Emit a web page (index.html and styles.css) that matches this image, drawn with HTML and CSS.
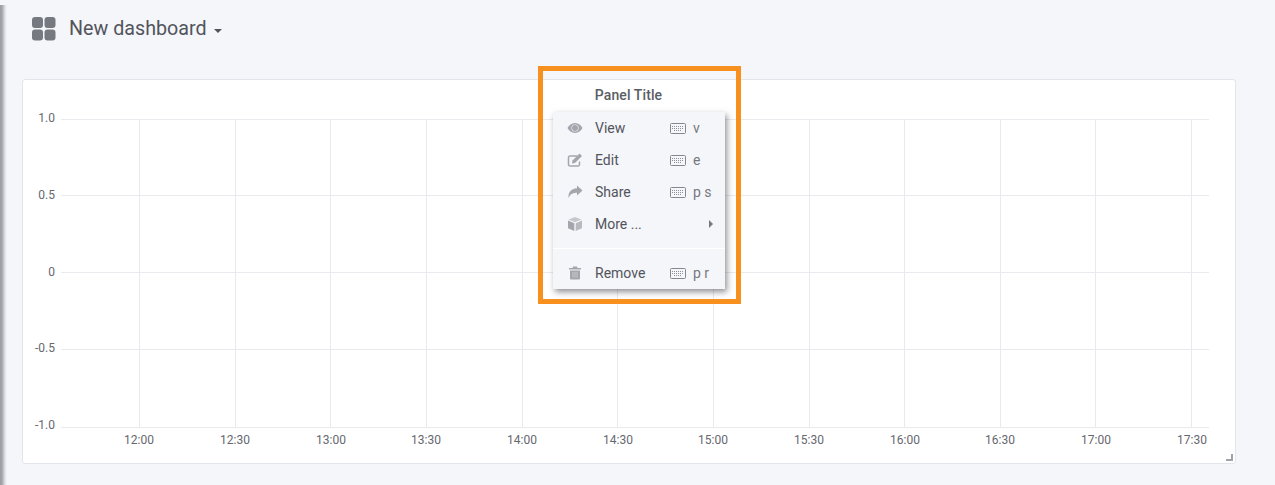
FILE: index.html
```html
<!DOCTYPE html>
<html lang="en">
<head>
    <meta charset="UTF-8">
    <title>New dashboard</title>
    <link rel="stylesheet" href="styles.css">
</head>
<body>

<div class="page">
    <div class="navbar">
        <svg class="dash-icon" width="24" height="24" viewBox="0 0 24 24">
            <rect x="0" y="0" width="11" height="11" rx="3"/>
            <rect x="12.5" y="0" width="11" height="11" rx="3"/>
            <rect x="0" y="12.5" width="11" height="11" rx="3"/>
            <rect x="12.5" y="12.5" width="11" height="11" rx="3"/>
        </svg>
        <span class="dash-title">New dashboard</span>
        <span class="caret"></span>
    </div>

    <div class="panel">
        <div class="panel-title">Panel Title</div>
        <svg class="chart" width="1212" height="383" viewBox="23 80 1212 383">
            <g class="grid">
                <line x1="139.5" y1="119" x2="139.5" y2="427"/>
                <line x1="235.5" y1="119" x2="235.5" y2="427"/>
                <line x1="330.5" y1="119" x2="330.5" y2="427"/>
                <line x1="426.5" y1="119" x2="426.5" y2="427"/>
                <line x1="522.5" y1="119" x2="522.5" y2="427"/>
                <line x1="617.5" y1="119" x2="617.5" y2="427"/>
                <line x1="713.5" y1="119" x2="713.5" y2="427"/>
                <line x1="809.5" y1="119" x2="809.5" y2="427"/>
                <line x1="904.5" y1="119" x2="904.5" y2="427"/>
                <line x1="1000.5" y1="119" x2="1000.5" y2="427"/>
                <line x1="1095.5" y1="119" x2="1095.5" y2="427"/>
                <line x1="1191.5" y1="119" x2="1191.5" y2="427"/>
                <line x1="61" y1="119.5" x2="1209" y2="119.5"/>
                <line x1="61" y1="195.5" x2="1209" y2="195.5"/>
                <line x1="61" y1="272.5" x2="1209" y2="272.5"/>
                <line x1="61" y1="349.5" x2="1209" y2="349.5"/>
                <line x1="61" y1="427.5" x2="1209" y2="427.5"/>
            </g>
            <g class="y-labels">
                <text x="55" y="122">1.0</text>
                <text x="55" y="199">0.5</text>
                <text x="55" y="276">0</text>
                <text x="55" y="352">-0.5</text>
                <text x="55" y="429">-1.0</text>
            </g>
            <g class="x-labels">
                <text x="139" y="444">12:00</text>
                <text x="235" y="444">12:30</text>
                <text x="331" y="444">13:00</text>
                <text x="426" y="444">13:30</text>
                <text x="522" y="444">14:00</text>
                <text x="618" y="444">14:30</text>
                <text x="713" y="444">15:00</text>
                <text x="809" y="444">15:30</text>
                <text x="905" y="444">16:00</text>
                <text x="1000" y="444">16:30</text>
                <text x="1096" y="444">17:00</text>
                <text x="1192" y="444">17:30</text>
            </g>
        </svg>
        <svg class="resize-handle" width="7" height="7" viewBox="0 0 7 7">
            <path d="M5 0h2v7H0V5h5z"/>
        </svg>

        <div class="panel-menu">
            <div class="menu-item">
                <svg class="menu-icon" width="16" height="16" viewBox="0 0 16 16">
                    <path fill-rule="evenodd" d="M8 3c3.500 0 6 2.300 7.500 5C14 10.700 11.500 13 8 13S2 10.700.5 8C2 5.300 4.500 3 8 3zm0 1.400a3.600 3.600 0 1 0 0 7.200 3.600 3.600 0 0 0 0-7.200z"/>
                    <circle cx="8" cy="8" r="3"/>
                </svg>
                <span class="menu-label">View</span>
                <span class="menu-key">
                    <svg class="kbd-icon" width="16" height="11" viewBox="0 0 16 11"><rect x=".5" y=".5" width="15" height="10" rx="1"/><path class="keys" d="M2 3.500h12M2 5.500h12M4 7.500h8"/></svg>
                    v
                </span>
            </div>
            <div class="menu-item">
                <svg class="menu-icon" width="16" height="16" viewBox="0 0 16 16">
                    <path class="outline" d="M12.500 9.500v3a1.500 1.500 0 0 1-1.500 1.500H3a1.500 1.500 0 0 1-1.500-1.500V5.500A1.500 1.500 0 0 1 3 4h7"/>
                    <path d="M5.500 8.500L12.500 1.500l2.500 2.500-7 7-3 .5z"/>
                </svg>
                <span class="menu-label">Edit</span>
                <span class="menu-key">
                    <svg class="kbd-icon" width="16" height="11" viewBox="0 0 16 11"><rect x=".5" y=".5" width="15" height="10" rx="1"/><path class="keys" d="M2 3.500h12M2 5.500h12M4 7.500h8"/></svg>
                    e
                </span>
            </div>
            <div class="menu-item">
                <svg class="menu-icon" width="16" height="16" viewBox="0 0 16 16">
                    <path d="M10 1.500L15.500 6.500 10 11.500V8.800C6.500 8.800 3.500 9.500 1.500 14 1 8.500 4 4.800 10 4.300z"/>
                </svg>
                <span class="menu-label">Share</span>
                <span class="menu-key">
                    <svg class="kbd-icon" width="16" height="11" viewBox="0 0 16 11"><rect x=".5" y=".5" width="15" height="10" rx="1"/><path class="keys" d="M2 3.500h12M2 5.500h12M4 7.500h8"/></svg>
                    p s
                </span>
            </div>
            <div class="menu-item">
                <svg class="menu-icon" width="16" height="16" viewBox="0 0 16 16">
                    <path class="cube-top" d="M8 1l6.500 2.500L8 6.200 1.500 3.500z"/>
                    <path d="M1 4.500l6.300 2.700v7.800L1 12.200z"/>
                    <path class="cube-side" d="M15 4.500L8.700 7.200v7.800L15 12.200z"/>
                </svg>
                <span class="menu-label">More ...</span>
                <span class="submenu-arrow"></span>
            </div>
            <div class="menu-divider"></div>
            <div class="menu-item">
                <svg class="menu-icon" width="16" height="16" viewBox="0 0 16 16">
                    <path d="M6 1.500h4l.5 1.500H14v1.500H2V3h3.500z"/>
                    <path d="M3 5.500h10v8a1 1 0 0 1-1 1H4a1 1 0 0 1-1-1z"/>
                    <path class="trash-lines" d="M6 7v5.500M8 7v5.500M10 7v5.500"/>
                </svg>
                <span class="menu-label">Remove</span>
                <span class="menu-key">
                    <svg class="kbd-icon" width="16" height="11" viewBox="0 0 16 11"><rect x=".5" y=".5" width="15" height="10" rx="1"/><path class="keys" d="M2 3.500h12M2 5.500h12M4 7.500h8"/></svg>
                    p r
                </span>
            </div>
        </div>

        <div class="highlight-box"></div>
    </div>
</div>

</body>
</html>
```

FILE: styles.css
```css
html, body {
    margin: 0;
    padding: 0;
}
body {
    font-family: Roboto, "Liberation Sans", sans-serif;
    background-color: #f5f6f9;
    color: #52545c;
    width: 1275px;
    height: 485px;
    overflow: hidden;
}
.page {
    height: 485px;
    box-sizing: border-box;
    padding: 0 39px 0 22px;
    background: linear-gradient(to right, #9a9ba0 0, #a6a7ac 2px, #e0e1e5 5px, #f5f6f9 7px) 0 5px / 8px 100% no-repeat;
}
.navbar {
    height: 79px;
    box-sizing: border-box;
    padding: 17px 0 0 10px;
    display: flex;
    align-items: flex-start;
}
.dash-icon {
    fill: #767980;
    flex: none;
}
.dash-title {
    margin-left: 13px;
    font-size: 19.7px;
    line-height: 23px;
    color: #52545c;
}
.caret {
    margin: 12px 0 0 7px;
    border-top: 4px solid #52545c;
    border-left: 4px solid transparent;
    border-right: 4px solid transparent;
}
.panel {
    position: relative;
    height: 385px;
    box-sizing: border-box;
    background: #fff;
    border: 1px solid #e3e5ec;
    border-radius: 3px;
}
.panel-title {
    position: absolute;
    top: 0;
    left: 0;
    right: 0;
    margin-top: 7px;
    padding-right: 1px;
    text-align: center;
    font-size: 14px;
    font-weight: 500;
    letter-spacing: 0.1px;
    line-height: 16px;
    color: #5a5c64;
}
.chart {
    display: block;
}
.grid line {
    stroke: #e9eaee;
    stroke-width: 1;
}
.chart text {
    font-family: Roboto, "Liberation Sans", sans-serif;
    font-size: 12px;
    fill: #66686f;
}
.y-labels text {
    text-anchor: end;
}
.x-labels text {
    text-anchor: middle;
}
.resize-handle {
    position: absolute;
    right: 2px;
    bottom: 2px;
    fill: #a0a2a8;
}
.panel-menu {
    position: absolute;
    left: 530px;
    top: 32px;
    width: 172px;
    height: 177px;
    box-sizing: border-box;
    background: #f5f6f9;
    box-shadow: 2px 3px 6px rgba(40, 40, 50, 0.5);
    font-size: 14px;
}
.menu-item {
    height: 32px;
    display: flex;
    align-items: center;
    padding-left: 14px;
    color: #52545c;
}
.menu-icon {
    fill: #a4a6ad;
    flex: none;
}
.menu-icon .outline {
    fill: none;
    stroke: #a4a6ad;
    stroke-width: 1.500;
}
.menu-icon .cube-top {
    fill: #c6c8cd;
}
.menu-icon .cube-side {
    fill: #b8bac0;
}
.menu-icon .trash-lines {
    fill: none;
    stroke: #c6c8cd;
    stroke-width: 1;
}
.menu-label {
    margin-left: 12px;
    flex: 1;
}
.menu-key {
    width: 55px;
    display: flex;
    align-items: center;
    gap: 7px;
    color: #767980;
}
.kbd-icon {
    flex: none;
}
.kbd-icon rect {
    fill: none;
    stroke: #85878e;
    stroke-width: 1;
}
.kbd-icon .keys {
    fill: none;
    stroke: #8d8f96;
    stroke-width: 1;
    stroke-dasharray: 1 1;
}
.submenu-arrow {
    margin-right: 12px;
    border-left: 4px solid #767980;
    border-top: 4px solid transparent;
    border-bottom: 4px solid transparent;
}
.menu-divider {
    height: 1px;
    margin: 8px 0 8px;
    background: #fff;
}
.highlight-box {
    position: absolute;
    left: 515px;
    top: -14px;
    width: 203px;
    height: 238px;
    box-sizing: border-box;
    border: 5px solid #f7901e;
}
```
